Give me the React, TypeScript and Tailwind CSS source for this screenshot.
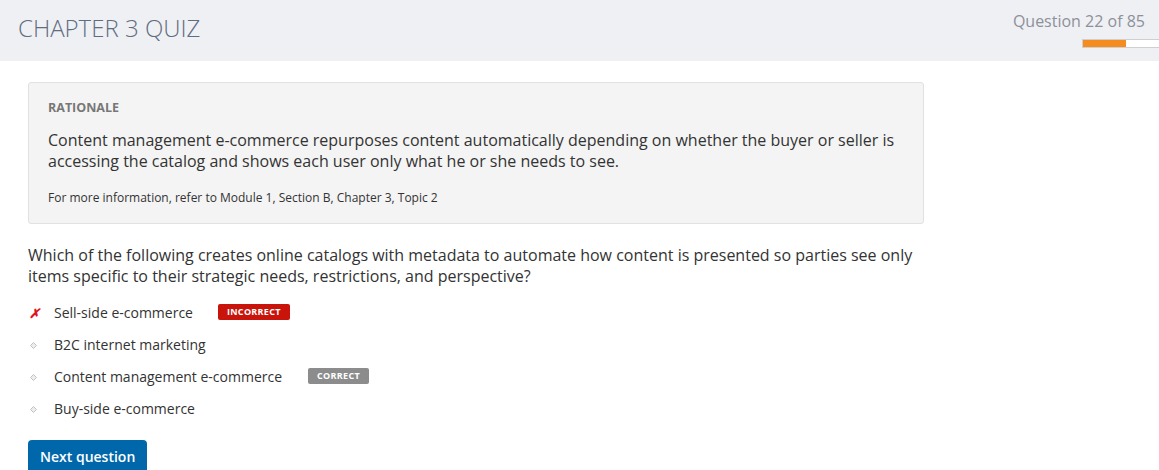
import { useState } from 'react'

type Option = { label: string; status?: 'incorrect' | 'correct' }

const options: Option[] = [
  { label: 'Sell-side e-commerce', status: 'incorrect' },
  { label: 'B2C internet marketing' },
  { label: 'Content management e-commerce', status: 'correct' },
  { label: 'Buy-side e-commerce' },
]

function Diamond() {
  return (
    <svg width="7" height="7" viewBox="0 0 7 7" className="block">
      <path d="M3.5 0.5 L6.5 3.5 L3.5 6.5 L0.5 3.5 Z" fill="#ededed" stroke="#c4c4c4" strokeWidth="1" />
    </svg>
  )
}

export default function App() {
  const [current] = useState(22)
  const total = 85
  const pct = (current / total) * 100

  return (
    <div className="min-h-[470px] bg-white font-['Open_Sans',sans-serif] text-[#333]">
      {/* Header */}
      <div className="flex h-[61px] items-start justify-between bg-[#eff0f4]">
        <h1 className="pl-[18px] pt-[12px] text-[24px] font-light leading-[32px] text-[#5f6d80]">
          CHAPTER 3 QUIZ
        </h1>
        <div className="flex w-[77px] flex-col items-end pt-[10px]">
          <div className="whitespace-nowrap pr-[14px] text-[16px] leading-[22px] text-[#8d9199]">
            Question {current} of {total}
          </div>
          <div className="mt-[7px] h-[9px] w-full border border-r-0 border-[#cfcfcf] bg-white">
            <div className="h-full bg-[#f58c1f]" style={{ width: `${pct * 2.2}%` }} />
          </div>
        </div>
      </div>

      <div className="px-[28px] pt-[21px]">
        {/* Rationale */}
        <div className="w-[896px] rounded-[3px] border border-[#e1e1e1] bg-[#f4f4f4] px-[19px] pb-[16px] pt-[16px]">
          <div className="text-[12.5px] font-bold leading-[18px] text-[#777]">RATIONALE</div>
          <p className="mt-[13px] text-[16px] leading-[21px] text-[#333]">
            Content management e-commerce repurposes content automatically depending on whether the buyer or seller is
            accessing the catalog and shows each user only what he or she needs to see.
          </p>
          <p className="mt-[17px] text-[12px] leading-[18px] text-[#333]">
            For more information, refer to Module 1, Section B, Chapter 3, Topic 2
          </p>
        </div>

        {/* Question */}
        <p className="mt-[21px] w-[900px] text-[16px] leading-[21px] text-[#333]">
          Which of the following creates online catalogs with metadata to automate how content is presented so parties see only
          items specific to their strategic needs, restrictions, and perspective?
        </p>

        <ul className="mt-[10px] flex flex-col">
          {options.map((o) => (
            <li key={o.label} className="flex h-[32px] items-center">
              <span className="flex w-[26px] items-center justify-start pl-[1px]">
                {o.status === 'incorrect' ? (
                  <span className="text-[13px] font-bold italic leading-none text-[#e0141e]">✗</span>
                ) : (
                  <span className="pl-[1px]"><Diamond /></span>
                )}
              </span>
              <span className="text-[14px] leading-[20px] text-[#333]">{o.label}</span>
              {o.status === 'incorrect' && (
                <span className="mb-[3px] ml-[25px] rounded-[2px] bg-[#c8140a] px-[9px] text-[9px] font-bold leading-[16px] tracking-[0.3px] text-white">
                  INCORRECT
                </span>
              )}
              {o.status === 'correct' && (
                <span className="mb-[3px] ml-[26px] rounded-[2px] bg-[#8c8c8c] px-[9px] text-[9px] font-bold leading-[16px] tracking-[0.3px] text-white">
                  CORRECT
                </span>
              )}
            </li>
          ))}
        </ul>

        <button className="mt-[15px] rounded-[4px] bg-[#0067ab] px-[12px] py-[7px] text-[14px] font-semibold leading-[20px] text-white">
          Next question
        </button>
      </div>
    </div>
  )
}
